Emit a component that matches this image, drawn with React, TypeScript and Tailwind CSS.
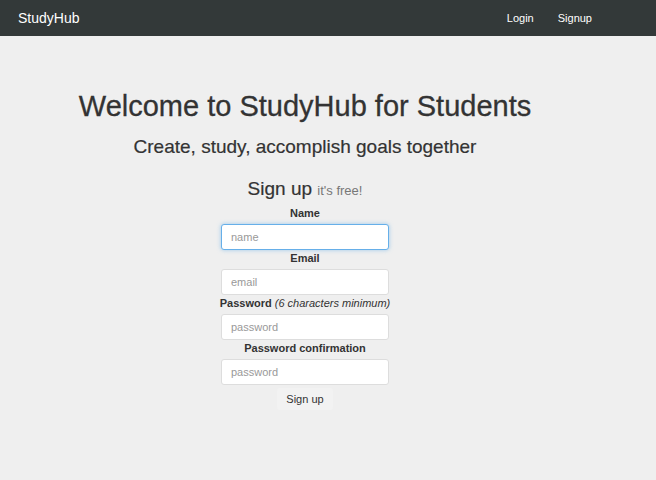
import React from "react";

const fields = [
  { label: "Name", hint: "", placeholder: "name", type: "text", focus: true },
  { label: "Email", hint: "", placeholder: "email", type: "email", focus: false },
  { label: "Password", hint: "(6 characters minimum)", placeholder: "password", type: "password", focus: false },
  { label: "Password confirmation", hint: "", placeholder: "password", type: "password", focus: false },
];

export default function App() {
  return (
    <div className="min-h-[480px] bg-[#efefef] font-['Liberation_Sans',Arial,sans-serif] text-[#333]">
      <nav className="flex h-9 items-center justify-between bg-[#333939] pl-[18px] pr-[64px] text-white">
        <span className="text-[14px]">StudyHub</span>
        <div className="flex gap-[24px] text-[11px]">
          <span>Login</span>
          <span>Signup</span>
        </div>
      </nav>

      <main className="w-[610px] pt-[52px] text-center">
        <h1 className="text-[29px] leading-[36px] [-webkit-text-stroke:0.3px_#333]">
          Welcome to StudyHub for Students
        </h1>
        <h2 className="mt-[11px] text-[19px] leading-[24px] [-webkit-text-stroke:0.2px_#333]">
          Create, study, accomplish goals together
        </h2>

        <div className="mx-auto mt-[18px] flex w-[168px] flex-col items-center">
          <h3 className="whitespace-nowrap text-[19px] leading-[24px] [-webkit-text-stroke:0.2px_#333]">
            Sign up <span className="text-[13px] text-[#777] [-webkit-text-stroke:0]">it's free!</span>
          </h3>
          <form className="mt-[3px] flex w-full flex-col">
            {fields.map((f) => (
              <div key={f.label} className="flex flex-col items-center">
                <label className="whitespace-nowrap text-[11px] font-bold leading-[15px]">
                  {f.label}
                  {f.hint && <span className="font-normal italic"> {f.hint}</span>}
                </label>
                <input
                  type={f.type}
                  placeholder={f.placeholder}
                  className={`mb-[1px] mt-[3px] h-[26px] w-full rounded-[3px] border bg-white px-[9px] text-[11px] placeholder:text-[#999] ${
                    f.focus
                      ? "border-[#66afe9] shadow-[0_0_4px_rgba(102,175,233,0.6)]"
                      : "border-[#ddd]"
                  }`}
                />
              </div>
            ))}
            <button
              type="button"
              className="mx-auto mt-[2px] h-[22px] w-[56px] rounded-[3px] bg-[#f2f2f2] text-[11px] text-[#333]"
            >
              Sign up
            </button>
          </form>
        </div>
      </main>
    </div>
  );
}
